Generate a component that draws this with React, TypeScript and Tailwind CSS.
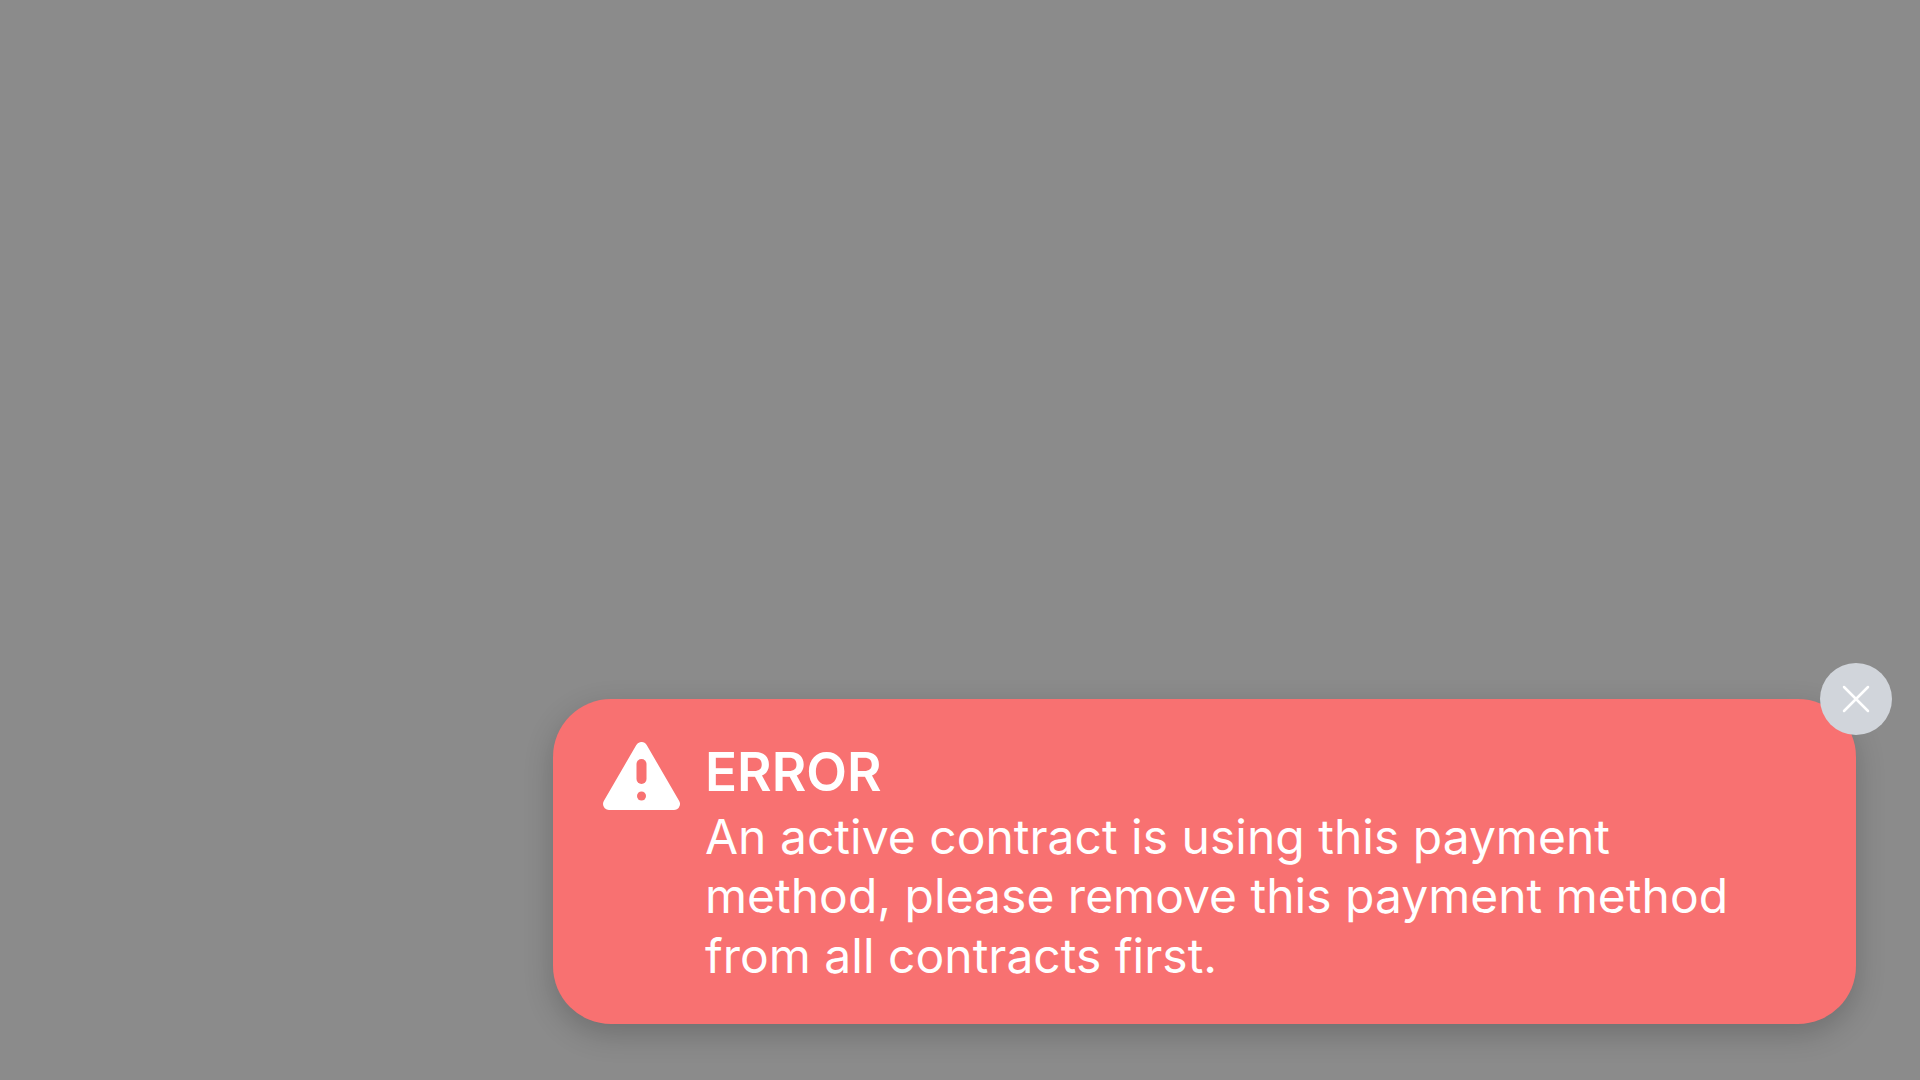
export default function App() {
  return (
    <div className="h-screen w-full bg-[#8b8b8b] flex items-end justify-end pr-16 pb-14 font-['Inter',sans-serif]">
      {/* toast */}
      <div className="relative w-[1303px] h-[325px] bg-[#f87171] rounded-[58px] shadow-[0_10px_30px_rgba(0,0,0,0.2)] flex pl-[50px] pt-[38px] text-white">
        <svg className="w-[77px] h-[68px] shrink-0 mt-[5px]" viewBox="0 0 77 68">
          <path fill="#fff" stroke="#fff" strokeWidth={12} strokeLinejoin="round" d="M38.500 6L71 62H6z" />
          <rect x="33.500" y="17" width="10" height="25" rx="5" fill="#f87171" />
          <circle cx="38.500" cy="54" r="4.500" fill="#f87171" />
        </svg>
        <div className="ml-[25px] w-[1060px]">
          <h3 className="text-[53px] leading-[70px] font-semibold">ERROR</h3>
          <p className="text-[48px] leading-[59.4px]">
            An active contract is using this payment method, please remove this payment method from all contracts first.
          </p>
        </div>
        <button className="absolute -top-9 -right-9 w-[72px] h-[72px] rounded-full bg-[#d1d5db] flex items-center justify-center">
          <svg className="w-[28px] h-[28px]" viewBox="0 0 28 28" fill="none" stroke="#fff" strokeWidth={2.500} strokeLinecap="round">
            <path d="M2 2l24 24M26 2L2 26" />
          </svg>
        </button>
      </div>
    </div>
  );
}
